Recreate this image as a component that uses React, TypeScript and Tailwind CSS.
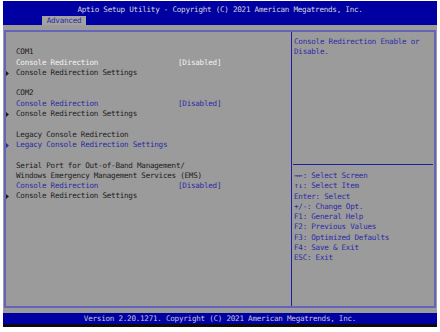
import React from 'react';

const mono = "font-['DejaVu_Sans_Mono',_'Liberation_Mono',_monospace] text-[7.6px] tracking-[-0.25px] leading-[10.3px] whitespace-pre";

type Row = {
  label?: string;
  value?: string;
  arrow?: boolean;
  tone?: 'dark' | 'blue' | 'white';
};

const rows: Row[] = [
  {},
  { label: 'COM1' },
  { label: 'Console Redirection', value: '[Disabled]', tone: 'white' },
  { label: 'Console Redirection Settings', arrow: true },
  {},
  { label: 'COM2' },
  { label: 'Console Redirection', value: '[Disabled]', tone: 'blue' },
  { label: 'Console Redirection Settings', arrow: true },
  {},
  { label: 'Legacy Console Redirection' },
  { label: 'Legacy Console Redirection Settings', arrow: true, tone: 'blue' },
  {},
  { label: 'Serial Port for Out-of-Band Management/' },
  { label: 'Windows Emergency Management Services (EMS)' },
  { label: 'Console Redirection', value: '[Disabled]', tone: 'blue' },
  { label: 'Console Redirection Settings', arrow: true },
];

const keys = [
  '→←: Select Screen',
  '↑↓: Select Item',
  'Enter: Select',
  '+/-: Change Opt.',
  'F1: General Help',
  'F2: Previous Values',
  'F3: Optimized Defaults',
  'F4: Save & Exit',
  'ESC: Exit',
];

function toneClass(tone?: Row['tone']) {
  if (tone === 'white') return 'text-[#f2f2f2]';
  if (tone === 'blue') return 'text-[#2b2ba6]';
  return 'text-[#1c1c1c]';
}

function Triangle({ tone }: { tone?: Row['tone'] }) {
  return (
    <svg width="3" height="5" viewBox="0 0 3 5" className={tone === 'blue' ? 'fill-[#2b2ba6]' : 'fill-[#1c1c1c]'}>
      <path d="M0 0 L3 2.5 L0 5 Z" />
    </svg>
  );
}

export default function App() {
  return (
    <div className="w-[440px] h-[332px] bg-white pl-[3px] pt-[1px]">
      <div className="w-[434px] h-[326px] flex flex-col bg-[#0c0c0c]">
        {/* title bar */}
        <div className="h-[24px] bg-[#0000a2] pt-[4px] flex flex-col">
          <div className={`${mono} h-[10px] leading-[10px] text-center text-[#d4d4dc]`}>
            Aptio Setup Utility - Copyright (C) 2021 American Megatrends, Inc.
          </div>
          <div className="flex pl-[39px] pt-[1px]">
            <div className={`${mono} h-[10px] leading-[10px] w-[44px] bg-[#a2a2a2] text-center text-[#2b2ba6]`}>
              Advanced
            </div>
          </div>
        </div>

        {/* body */}
        <div className="h-[288px] bg-[#9b9b9b] pt-[5px] pb-[5px] pl-[1px] pr-[1px]">
          <div className="h-[278px] border-2 border-[#6464b8] flex">
            <div className="w-[285px] pt-[5px]">
              {rows.map((r, i) => (
                <div key={i} className={`${mono} h-[10.3px] flex items-center ${toneClass(r.tone)}`}>
                  <div className="w-[10px] flex items-center">{r.arrow && <Triangle tone={r.tone} />}</div>
                  <span className="w-[162px]">{r.label ?? ''}</span>
                  {r.value && <span>{r.value}</span>}
                </div>
              ))}
            </div>
            <div className="w-[1px] bg-[#1e1ea2]" />
            <div className="flex-1 flex flex-col">
              <div className={`${mono} h-[132px] pt-[5px] pl-[2px] text-[#2b2ba6]`}>
                <div>Console Redirection Enable or</div>
                <div>Disable.</div>
              </div>
              <div className="h-[1px] mx-[1px] bg-[#1e1ea2]" />
              <div className={`${mono} pt-[6px] pl-[2px] text-[#2b2ba6]`}>
                {keys.map((k) => (
                  <div key={k}>{k}</div>
                ))}
              </div>
            </div>
          </div>
        </div>

        {/* footer */}
        <div className={`${mono} h-[11px] leading-[11px] bg-[#0000a2] text-center text-[#c4c4d4]`}>
          Version 2.20.1271. Copyright (C) 2021 American Megatrends, Inc.
        </div>
      </div>
    </div>
  );
}
